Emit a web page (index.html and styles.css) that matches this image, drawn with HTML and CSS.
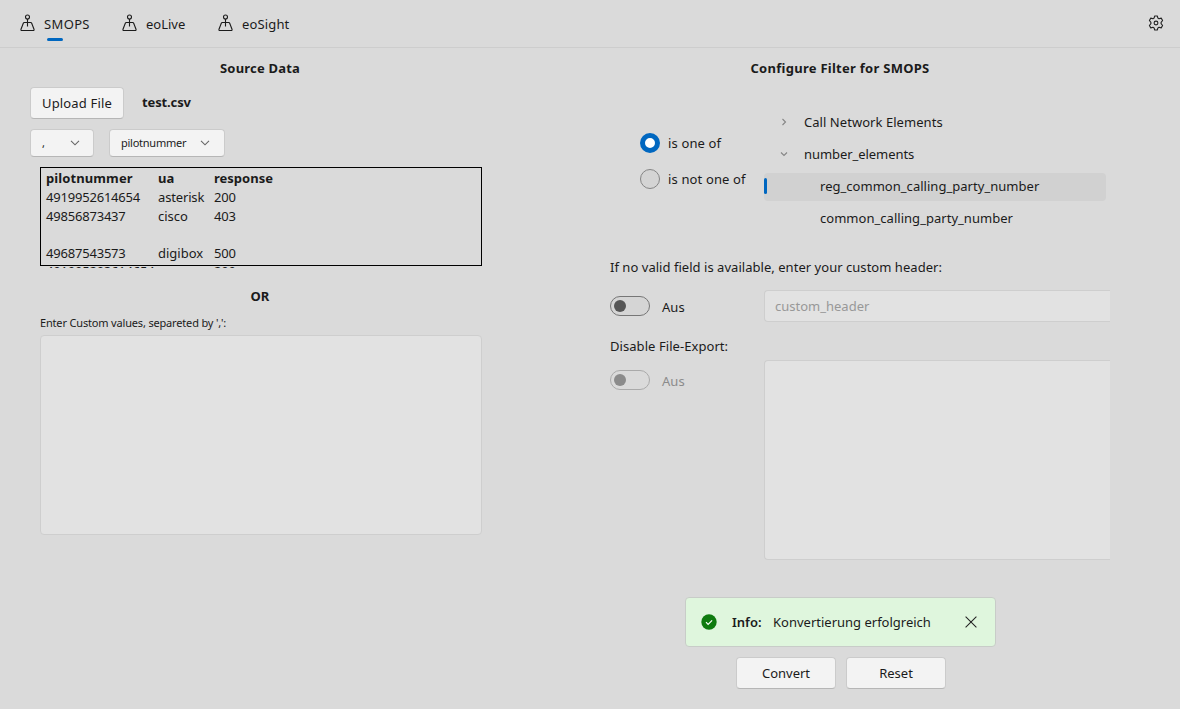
FILE: index.html
```html
<!DOCTYPE html>
<html lang="de">
<head>
<meta charset="utf-8">
<title>SMOPS</title>
<link rel="stylesheet" href="styles.css">
</head>
<body>
<svg class="defs" width="0" height="0">
  <symbol id="joystick" viewBox="0 0 16 18"><g fill="none" stroke="#1b1b1b" stroke-width="1.1"><circle cx="7.500" cy="3" r="2"/><path d="M7.500 5v7.500M5.500 8.500H4.300Q3.600 8.500 3.300 9.200L1 15.200Q.7 16.500 1.700 16.500H13.300Q14.300 16.500 14 15.200L11.700 9.200Q11.400 8.500 10.700 8.500H4.500"/></g></symbol>
  <symbol id="down" viewBox="0 0 10 6"><path d="M1 .8l4 4 4-4" fill="none" stroke="#666" stroke-width="1.100"/></symbol>
</svg>
<header class="topbar">
  <nav class="tabs">
    <a class="tab active"><svg class="joy"><use href="#joystick"/></svg><span class="t-smops">SMOPS</span></a>
    <a class="tab"><svg class="joy"><use href="#joystick"/></svg><span>eoLive</span></a>
    <a class="tab"><svg class="joy"><use href="#joystick"/></svg><span class="t-sight">eoSight</span></a>
  </nav>
  <svg class="gear" viewBox="0 0 16 16" fill="none" stroke="#222" stroke-width="1.100" stroke-linejoin="round"><path d="M6.700 1h2.600l.6 2.100 1.100.6 2.200-.6 1.400 2.400L13.100 7.300v1.400l1.500 1.800-1.400 2.400-2.200-.6-1.100.6-.6 2.100H6.700l-.6-2.100-1.100-.6-2.200.6-1.400-2.400L2.900 8.700V7.300L1.400 5.500l1.400-2.400 2.200.6 1.100-.6z"/><circle cx="8" cy="8" r="1.900"/></svg>
</header>
<main class="columns">
  <section class="source">
    <h2 class="title t-source">Source Data</h2>
    <div class="upload"><button class="btn b-upload">Upload File</button><b class="file">test.csv</b></div>
    <div class="selects">
      <div class="select s-sep"><span>,</span><svg class="chev"><use href="#down"/></svg></div>
      <div class="select s-col"><span>pilotnummer</span><svg class="chev"><use href="#down"/></svg></div>
    </div>
    <div class="clip"><div class="frame"><div class="data">
      <b class="h1">pilotnummer</b><b>ua</b><b>response</b>
      <span class="num">4919952614654</span><span class="ua">asterisk</span><span class="num">200</span>
      <span class="num">49856873437</span><span>cisco</span><span class="num">403</span>
      <span></span><span></span><span></span>
      <span class="num">49687543573</span><span>digibox</span><span class="num">500</span>
      <span class="num">491995203614654</span><span></span><span class="num">200</span>
    </div></div></div>
    <h2 class="title or">OR</h2>
    <label class="hint">Enter Custom values, separeted by ',':</label>
    <div class="area"></div>
  </section>
  <section class="filter">
    <h2 class="title t-filter">Configure Filter for SMOPS</h2>
    <div class="choose">
      <div class="radios">
        <div class="radio"><i class="dot on"></i><span>is one of</span></div>
        <div class="radio"><i class="dot"></i><span>is not one of</span></div>
      </div>
      <div class="tree">
        <div class="node"><svg class="arrow" viewBox="0 0 8 8"><path d="M2.500 1l3 3-3 3"/></svg><span class="t-call">Call Network Elements</span></div>
        <div class="node"><svg class="arrow" viewBox="0 0 8 8"><path d="M1 2.500l3 3 3-3"/></svg><span class="t-elem">number_elements</span></div>
        <div class="node leaf selected"><span>reg_common_calling_party_number</span></div>
        <div class="node leaf"><span>common_calling_party_number</span></div>
      </div>
    </div>
    <div class="line"><span class="t-valid">If no valid field is available, enter your custom header:</span></div>
    <div class="options">
      <div class="switches">
        <div class="switch"><i class="track"></i><span>Aus</span></div>
        <div class="line2"><span>Disable File-Export:</span></div>
        <div class="switch off"><i class="track"></i><span>Aus</span></div>
      </div>
      <div class="fields"><div class="input"><span>custom_header</span></div><div class="output"></div></div>
    </div>
    <div class="info">
      <svg class="ok" viewBox="0 0 16 16"><circle cx="8" cy="8" r="7.700" fill="#0f7b0f"/><path d="M5 8.200l2.100 2.100 4-4" fill="none" stroke="#fff" stroke-width="1.200"/></svg>
      <b class="t-info">Info:</b><span>Konvertierung erfolgreich</span>
      <svg class="close" viewBox="0 0 12 12"><path d="M.6.6l10.800 10.800M11.400.6L.6 11.400" stroke="#222" stroke-width="1.050"/></svg>
    </div>
    <div class="actions"><button class="btn b-act">Convert</button><button class="btn b-act b-reset">Reset</button></div>
  </section>
</main>
</body>
</html>
```
FILE: styles.css
```css
* { box-sizing: border-box; }
body { margin: 0; height: 709px; overflow: hidden; background: #dadada; color: #1b1b1b; font: 13px/20px "Noto Sans", "Open Sans", sans-serif; white-space: nowrap; }
.defs { position: absolute; }
.topbar { height: 48px; border-bottom: 1px solid #cdcdcd; display: flex; justify-content: space-between; padding: 0 16px 0 20px; }
.tabs { display: flex; }
.tab { display: flex; padding-top: 14px; height: 47px; position: relative; }
.tab:nth-child(1) { width: 102px; }
.tab:nth-child(2) { width: 96px; }
.joy { width: 16px; height: 18px; margin-right: 8px; }
.t-smops { letter-spacing: .35px; }
.t-sight { letter-spacing: .15px; }
.tab.active::after { content: ""; position: absolute; left: 27px; top: 38px; width: 16px; height: 3px; border-radius: 2px; background: #0067c0; }
.gear { width: 16px; height: 16px; margin-top: 15px; }
.columns { display: grid; grid-template-columns: 580px 580px; }
.source, .filter { padding: 10px 0 0 30px; }
.title { margin: 0; width: 460px; font-size: 13px; line-height: 20px; font-weight: 700; text-align: center; letter-spacing: .2px; }
.t-filter { letter-spacing: .27px; }
.btn { height: 32px; padding: 0; border: 1px solid #cbcbcb; border-bottom-color: #b6b6b6; border-radius: 4px; background: #f3f3f3; color: #1b1b1b; font: inherit; text-align: center; }
.upload { display: flex; margin-top: 9px; }
.b-upload { width: 94px; margin-right: 18px; letter-spacing: .17px; }
.file { line-height: 30px; letter-spacing: -.12px; }
.selects { display: flex; gap: 15px; margin-top: 10px; }
.select { height: 28px; border: 1px solid #cbcbcb; border-bottom-color: #b6b6b6; border-radius: 4px; background: #f3f3f3; display: flex; justify-content: space-between; align-items: center; padding: 0 13px 0 11px; font-size: 11px; }
.s-sep { width: 64px; }
.s-col { width: 116px; padding-right: 14px; letter-spacing: -.25px; }
.chev { width: 10px; height: 6px; }
.clip { height: 101px; margin: 10px 0 0 10px; overflow: hidden; }
.frame { width: 442px; height: 99px; border: 1px solid #000; padding: 1px 5px; }
.data { display: grid; grid-template-columns: 112px 56px 100px; grid-template-rows: 19px 19px 19px 18px 18px 19px; line-height: 19px; }
.h1 { letter-spacing: .1px; }
.num { letter-spacing: -.2px; }
.ua { letter-spacing: -.15px; }
.or { margin-top: 18px; }
.hint { display: block; margin: 7px 0 0 10px; font-size: 11px; line-height: 20px; letter-spacing: -.17px; }
.area { width: 442px; height: 200px; margin: 2px 0 0 10px; background: #e2e2e2; border: 1px solid #cecece; border-radius: 4px; }
.choose { display: flex; margin-top: 28px; }
.radios { width: 154px; padding: 27px 0 0 30px; display: grid; grid-auto-rows: 20px; gap: 16px; align-content: start; letter-spacing: .14px; }
.radio { display: flex; gap: 8px; }
.dot { width: 20px; height: 20px; border: 1px solid #858585; border-radius: 50%; background: #d4d4d4; }
.dot.on { border: 5px solid #0067c0; background: #fff; }
.tree { width: 342px; letter-spacing: .03px; }
.t-call { letter-spacing: .05px; }
.t-elem { letter-spacing: -.06px; }
.node { height: 32px; display: flex; align-items: center; position: relative; padding-left: 16px; }
.arrow { width: 8px; height: 8px; margin-right: 16px; fill: none; stroke: #858585; stroke-width: 1.1; }
.leaf { padding-left: 56px; }
.selected { height: 28px; margin: 3px 0 1px; padding-bottom: 2px; background: #d1d1d1; border-radius: 4px; }
.selected::before { content: ""; position: absolute; left: 0; top: 5px; width: 3px; height: 16px; border-radius: 2px; background: #0067c0; }
.line { margin-top: 23px; letter-spacing: .035px; }
.options { display: flex; margin-top: 13px; }
.switches { width: 154px; padding-top: 6px; letter-spacing: .06px; }
.switch { display: flex; gap: 12px; height: 20px; line-height: 22px; }
.track { width: 40px; height: 20px; border: 1px solid #767676; border-radius: 10px; background: #d5d5d5; padding: 3px; }
.track::before { content: ""; display: block; width: 12px; height: 12px; border-radius: 50%; background: #555; }
.off { color: #8b8b8b; }
.off .track { border-color: #aaa; background: #dadada; }
.off .track::before { background: #8b8b8b; }
.line2 { margin: 20px 0 14px; }
.fields { width: 346px; }
.input { height: 32px; border: 1px solid #cecece; border-right: 0; border-radius: 4px 0 0 4px; background: #e2e2e2; padding: 5px 10px; color: #989898; }
.output { height: 200px; margin-top: 38px; border: 1px solid #cecece; border-right: 0; border-radius: 4px 0 0 4px; background: #e2e2e2; }
.info { width: 311px; height: 50px; margin: 37px 0 0 75px; border: 1px solid #c8ccc8; border-radius: 4px; background: #dff6dd; display: flex; align-items: center; padding: 0 18px 0 15px; }
.ok { width: 16px; height: 16px; margin-right: 15px; }
.t-info { width: 41px; font-weight: 600; }
.close { width: 12px; height: 12px; margin-left: auto; }
.actions { display: flex; gap: 10px; margin: 10px 0 0 126px; }
.b-act { width: 100px; }
```
